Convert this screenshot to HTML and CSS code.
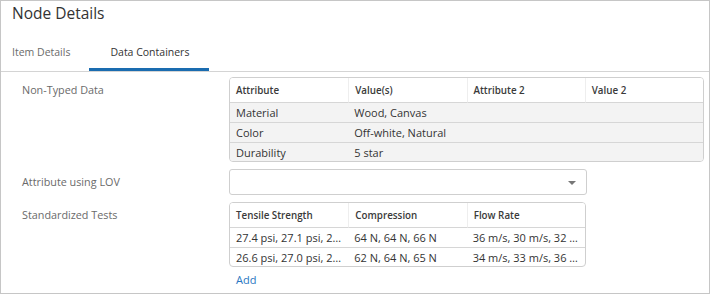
FILE: index.html
```html
<!DOCTYPE html>
<html lang="en">
<head>
  <meta charset="UTF-8" />
  <title>Node Details</title>
  <link rel="stylesheet" href="styles.css">
</head>
<body>
  <div class="panel">
    <h1 class="title">Node Details</h1>

    <div class="tabs">
      <div class="tab tab-first">Item Details</div>
      <div class="tab active">Data Containers</div>
    </div>

    <div class="content">
      <div class="field">
        <div class="label">Non-Typed Data</div>
        <table class="grid grid-wide grid-grey">
          <thead>
            <tr><th>Attribute</th><th>Value(s)</th><th>Attribute 2</th><th>Value 2</th></tr>
          </thead>
          <tbody>
            <tr><td>Material</td><td>Wood, Canvas</td><td></td><td></td></tr>
            <tr><td>Color</td><td>Off-white, Natural</td><td></td><td></td></tr>
            <tr><td>Durability</td><td>5 star</td><td></td><td></td></tr>
          </tbody>
        </table>
      </div>

      <div class="field field-center">
        <div class="label">Attribute using LOV</div>
        <div class="select"><span class="caret"></span></div>
      </div>

      <div class="field">
        <div class="label">Standardized Tests</div>
        <div class="stack">
          <table class="grid">
            <thead>
              <tr><th>Tensile Strength</th><th>Compression</th><th>Flow Rate</th></tr>
            </thead>
            <tbody>
              <tr><td>27.4 psi, 27.1 psi, 2…</td><td>64 N, 64 N, 66 N</td><td>36 m/s, 30 m/s, 32 …</td></tr>
              <tr><td>26.6 psi, 27.0 psi, 2…</td><td>62 N, 64 N, 65 N</td><td>34 m/s, 33 m/s, 36 …</td></tr>
            </tbody>
          </table>
          <a class="add-link" href="#">Add</a>
        </div>
      </div>
    </div>
  </div>
</body>
</html>
```

FILE: styles.css
```css
* {
  margin: 0;
  padding: 0;
  box-sizing: border-box;
}

body {
  font-family: 'Open Sans', 'Noto Sans', sans-serif;
  color: #333;
  background: #fff;
}

.panel {
  width: 710px;
  height: 294px;
  border: 1px solid #c6c6c6;
  overflow: hidden;
}

.title {
  font-size: 15.5px;
  font-weight: 400;
  line-height: 24px;
  height: 35px;
  padding: 0 0 0 11px;
  color: #333;
}

.tabs {
  display: flex;
  height: 36px;
  border-bottom: 1px solid #d4d4d4;
}

.tab {
  font-size: 10.5px;
  line-height: 32px;
  color: #6b6b6b;
  padding: 0 20px 0 21px;
  border-bottom: 3px solid transparent;
}

.tab-first {
  padding: 0 19px 0 11px;
}

.tab.active {
  color: #333;
  border-bottom-color: #1a6cb0;
}

.content {
  padding: 5px 0 0 21px;
  display: flex;
  flex-direction: column;
  gap: 7px;
}

.field {
  display: flex;
  align-items: flex-start;
}

.field-center {
  align-items: center;
}

.label {
  width: 207px;
  font-size: 10.8px;
  line-height: 26px;
  color: #6a6a6a;
  flex-shrink: 0;
}

.stack {
  display: flex;
  flex-direction: column;
}

.grid {
  width: 357px;
  table-layout: fixed;
  border-collapse: separate;
  border-spacing: 0;
  border: 1px solid #cfcfcf;
  border-radius: 4px;
  overflow: hidden;
  font-size: 11px;
}

.grid-wide {
  width: 475px;
}

.grid th {
  height: 25px;
  text-align: left;
  font-size: 9.8px;
  font-weight: 600;
  color: #3a3a3a;
  padding: 0 6px;
  background: #fff;
  border-left: 1px solid #eeeeee;
  border-bottom: 1px solid #d6d6d6;
  white-space: nowrap;
}

.grid th:first-child {
  border-left: none;
}

.grid td {
  height: 20px;
  padding: 0 6px;
  color: #333;
  border-bottom: 1px solid #d6d6d6;
  white-space: nowrap;
  overflow: hidden;
}

.grid tbody tr:last-child td {
  height: 18px;
  border-bottom: none;
}

.grid-grey td {
  background: #f3f3f3;
}

.select {
  position: relative;
  width: 358px;
  height: 26px;
  border: 1px solid #cfcfcf;
  border-radius: 3px;
  background: #fff;
}

.caret {
  position: absolute;
  right: 10px;
  top: 11px;
  width: 0;
  height: 0;
  border-left: 4px solid transparent;
  border-right: 4px solid transparent;
  border-top: 4px solid #777;
}

.add-link {
  font-size: 11px;
  color: #2a77c2;
  text-decoration: none;
  line-height: 14px;
  margin: 6px 0 0 7px;
}
```
